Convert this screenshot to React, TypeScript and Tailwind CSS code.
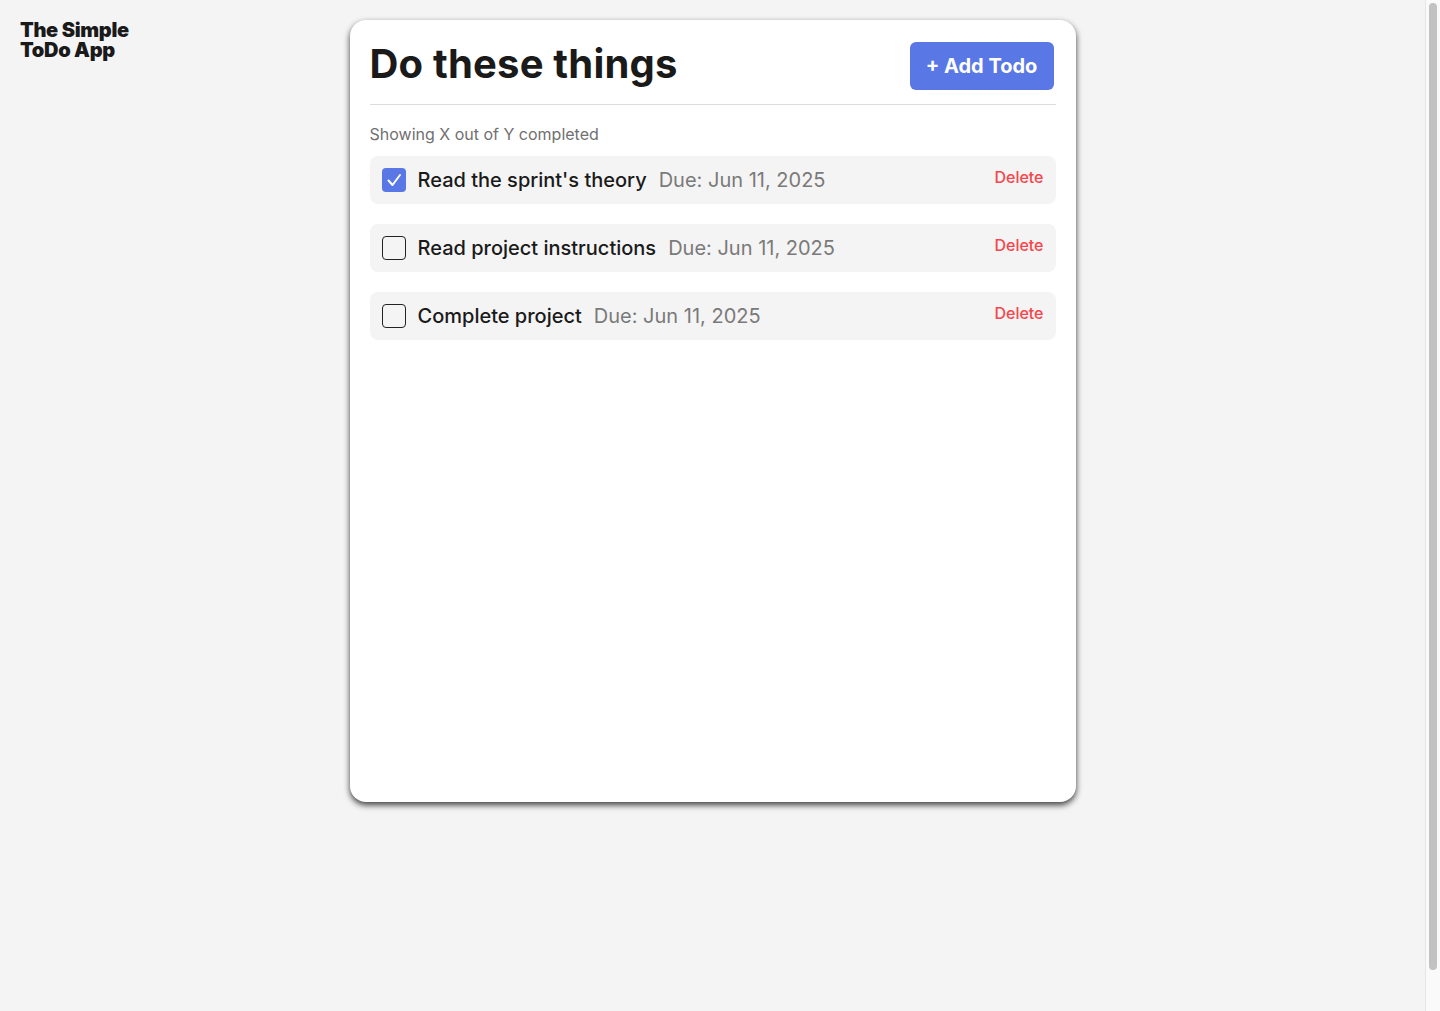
import React, { useState } from 'react';

type Todo = {
  id: number;
  title: string;
  due: string;
  done: boolean;
};

const initialTodos: Todo[] = [
  { id: 1, title: "Read the sprint's theory", due: 'Jun 11, 2025', done: true },
  { id: 2, title: 'Read project instructions', due: 'Jun 11, 2025', done: false },
  { id: 3, title: 'Complete project', due: 'Jun 11, 2025', done: false },
];

const App: React.FC = () => {
  const [todos, setTodos] = useState<Todo[]>(initialTodos);

  const toggle = (id: number) => {
    setTodos((prev) => prev.map((t) => (t.id === id ? { ...t, done: !t.done } : t)));
  };

  const remove = (id: number) => {
    setTodos((prev) => prev.filter((t) => t.id !== id));
  };

  return (
    <div className="min-h-[1057px] bg-[#f4f4f4] pr-[15px] font-['Inter',sans-serif] text-[#1a1a1a]">
      <div className="grid grid-cols-[1fr_726px_1fr] pt-5">
        {/* Logo */}
        <div className="pl-5">
          <h2 className="text-[20px] leading-[20px] font-black tracking-[-0.015em] text-[#1a1a1a]">
            The Simple
            <br />
            ToDo App
          </h2>
        </div>

        {/* Card */}
        <main className="h-[782px] rounded-2xl bg-white p-5 shadow-[0_3px_6px_rgba(0,0,0,0.75)]">
          <div className="flex items-start justify-between border-b border-[#dcdcdc] pb-[14px]">
            <h1 className="text-[40px] leading-[48px] font-bold tracking-[0.005em] text-[#1a1a1a]">
              Do these things
            </h1>
            <button className="mr-[2px] mt-[2px] h-12 w-[144px] rounded-md bg-[#5a78e5] text-[20px] font-bold text-white">
              + Add Todo
            </button>
          </div>

          <p className="mt-[17px] text-[16px] leading-6 text-[#707070]">
            Showing X out of Y completed
          </p>

          <ul className="mt-[10px] flex flex-col gap-5">
            {todos.map((todo) => (
              <li
                key={todo.id}
                className="flex h-12 items-center rounded-lg bg-[#f4f4f4] pl-3 pr-3"
              >
                <button
                  onClick={() => toggle(todo.id)}
                  aria-label="Toggle"
                  className={`flex h-6 w-6 shrink-0 items-center justify-center rounded ${
                    todo.done ? 'bg-[#5a78e5]' : 'border border-[#222] bg-transparent'
                  }`}
                >
                  {todo.done && (
                    <svg className="h-6 w-6" viewBox="0 0 24 24" fill="none" stroke="white" strokeWidth={2} strokeLinecap="round" strokeLinejoin="round">
                      <path d="M6.5 12.5l4 4.5 7.5-10" />
                    </svg>
                  )}
                </button>
                <span className="ml-3 text-[20px] font-medium text-[#1a1a1a]">{todo.title}</span>
                <span className="ml-3 text-[20px] text-[#7a7a7a]">Due: {todo.due}</span>
                <button
                  onClick={() => remove(todo.id)}
                  className="mb-[6px] ml-auto text-[16px] font-medium text-[#f4464b]"
                >
                  Delete
                </button>
              </li>
            ))}
          </ul>
        </main>

        <div />
      </div>

      {/* scrollbar track drawn over the page edge */}
      <div className="fixed right-0 top-0 flex h-full w-[15px] justify-center border-l border-[#e6e6e6] bg-[#fafafa] pt-[3px]">
        <div className="h-[967px] w-[8px] rounded-full bg-[#c2c2c2]" />
      </div>
    </div>
  );
};

export default App;
